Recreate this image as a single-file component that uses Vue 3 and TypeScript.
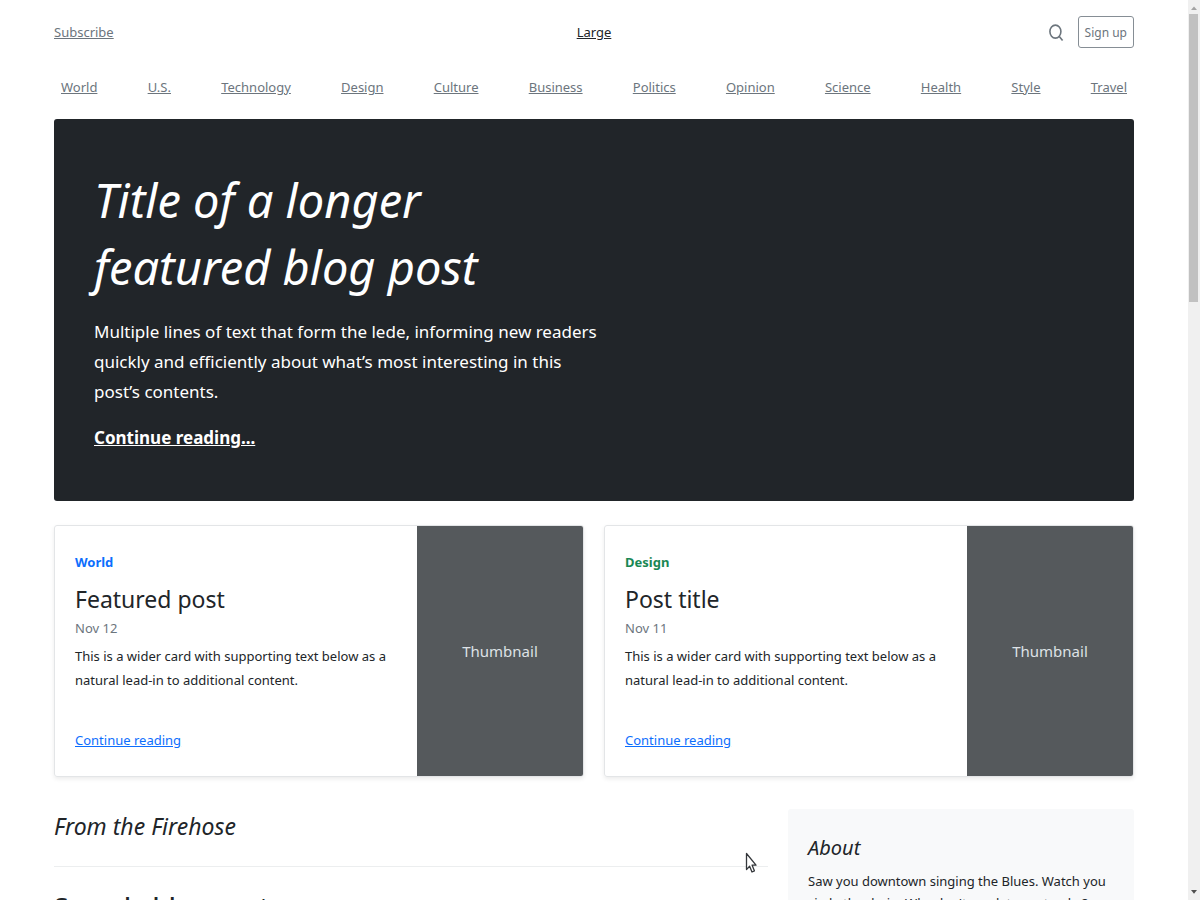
<script setup lang="ts">
interface Post {
  category: string
  tone: 'primary' | 'success'
  title: string
  date: string
  text: string
}

const sections: string[] = [
  'World', 'U.S.', 'Technology', 'Design', 'Culture', 'Business',
  'Politics', 'Opinion', 'Science', 'Health', 'Style', 'Travel',
]

const posts: Post[] = [
  {
    category: 'World',
    tone: 'primary',
    title: 'Featured post',
    date: 'Nov 12',
    text: 'This is a wider card with supporting text below as a natural lead-in to additional content.',
  },
  {
    category: 'Design',
    tone: 'success',
    title: 'Post title',
    date: 'Nov 11',
    text: 'This is a wider card with supporting text below as a natural lead-in to additional content.',
  },
]
</script>

<template>
  <div class="viewport">
    <div class="page">
      <div class="container">
        <header class="masthead">
          <div><a class="muted" href="#">Subscribe</a></div>
          <a class="brand" href="#">Large</a>
          <div class="actions">
            <a class="search" href="#" aria-label="Search">
              <svg width="18" height="20" viewBox="0 0 18 20" fill="none" stroke="currentColor" stroke-width="1.6">
                <ellipse cx="7.4" cy="9.6" rx="5.5" ry="6.5" />
                <path d="M11.3 14.4 14.6 18.6" />
              </svg>
            </a>
            <button class="signup" type="button">Sign up</button>
          </div>
        </header>

        <nav class="sections">
          <a v-for="name in sections" :key="name" class="muted" href="#">{{ name }}</a>
        </nav>

        <main>
          <section class="hero">
            <div class="hero-body">
              <h1>Title of a longer featured blog post</h1>
              <p>Multiple lines of text that form the lede, informing new readers quickly and efficiently about what’s most interesting in this post’s contents.</p>
              <p><a href="#">Continue reading...</a></p>
            </div>
          </section>

          <div class="cards">
            <article v-for="post in posts" :key="post.title" class="card">
              <div class="card-body">
                <strong :class="post.tone">{{ post.category }}</strong>
                <h3>{{ post.title }}</h3>
                <div class="date">{{ post.date }}</div>
                <p>{{ post.text }}</p>
                <a href="#">Continue reading</a>
              </div>
              <div class="thumbnail">Thumbnail</div>
            </article>
          </div>

          <div class="columns">
            <div class="feed">
              <h3>From the Firehose</h3>
              <h2>Sample blog post</h2>
            </div>
            <aside class="about">
              <h4>About</h4>
              <p>Saw you downtown singing the Blues. Watch you circle the drain. Why don't you let me stop by? Heavy is the head that wears the crown.</p>
            </aside>
          </div>
        </main>
      </div>
    </div>

    <div class="scrollbar" aria-hidden="true">
      <svg width="12" height="14" viewBox="0 0 12 14"><path d="M3 10 6 6.4 9 10Z" fill="#a3a3a3" /></svg>
      <div class="track"><div class="thumb"></div></div>
      <svg width="12" height="14" viewBox="0 0 12 14"><path d="M3 4 6 7.8 9 4Z" fill="#505050" /></svg>
    </div>

    <svg class="pointer" width="14" height="22" viewBox="0 0 14 22" aria-hidden="true">
      <path d="M1.5 1.5V17.6L4.6 14.2 7 20 9.4 18.8 7.1 13.2H11Z" fill="#fff" stroke="#34373b" stroke-width="1.3" stroke-linejoin="round" />
    </svg>
  </div>
</template>

<style>
body {
  margin: 0;
  background: #fff;
}
</style>

<style scoped>
.viewport {
  position: relative;
  display: flex;
  height: 100vh;
  overflow: hidden;
  font-family: "Noto Sans", "Open Sans", sans-serif;
  font-size: 13px;
  line-height: 24px;
  color: #212529;
}

.page {
  flex: 1;
  min-width: 0;
  overflow: hidden;
}

.container {
  max-width: 1080px;
  margin: 0 auto;
}

h1, h2, h3, h4, p {
  margin: 0;
  font-weight: 400;
}

.muted {
  color: #6c757d;
}

.masthead {
  display: grid;
  grid-template-columns: 1fr auto 1fr;
  align-items: center;
  height: 64px;
}

.brand {
  color: #212529;
}

.actions {
  display: flex;
  justify-content: flex-end;
  align-items: center;
  gap: 12px;
}

.search {
  display: flex;
  color: #6c757d;
}

.signup {
  height: 32px;
  padding: 0 6px;
  border: 1px solid #868e95;
  border-radius: 3px;
  background: transparent;
  color: #6c757d;
  font-family: inherit;
  font-size: 12px;
}

.sections {
  display: flex;
  justify-content: space-between;
  padding: 11px 7px 20px;
}

.hero {
  padding: 48px 40px;
  border-radius: 3px;
  background: #212529;
  color: #fff;
}

.hero-body {
  max-width: 508px;
  font-size: 17px;
  line-height: 30px;
}

.hero h1 {
  max-width: 440px;
  font-size: 47px;
  line-height: 67px;
  font-style: italic;
}

.hero p {
  margin-top: 16px;
}

.hero a {
  color: #fff;
  font-weight: 700;
}

.cards {
  display: grid;
  grid-template-columns: 1fr 1fr;
  gap: 20px;
  margin-top: 24px;
}

.card {
  display: flex;
  min-height: 250px;
  border: 1px solid #e3e5e7;
  border-radius: 3px;
  box-shadow: 0 2px 4px rgba(0, 0, 0, 0.08);
  overflow: hidden;
}

.card-body {
  flex: 1;
  display: flex;
  flex-direction: column;
  align-items: flex-start;
  padding: 24px 20px;
}

.card-body h3 {
  margin-top: 8px;
  font-size: 23px;
  line-height: 34px;
}

.card-body p {
  margin-top: 4px;
}

.card-body a {
  margin-top: auto;
  color: #0d6efd;
}

.card-body .primary {
  color: #0d6efd;
}

.card-body .success {
  color: #198754;
}

.date {
  color: #6c757d;
}

.thumbnail {
  display: flex;
  align-items: center;
  justify-content: center;
  width: 166px;
  background: #55595c;
  color: #dee2e6;
  font-size: 15px;
}

.columns {
  display: grid;
  grid-template-columns: minmax(0, 714fr) minmax(0, 346fr);
  gap: 20px;
  margin-top: 32px;
}

.feed h3 {
  padding-bottom: 23px;
  border-bottom: 1px solid #eceeef;
  font-size: 23px;
  line-height: 34px;
  font-style: italic;
}

.feed h2 {
  margin-top: 24px;
  font-size: 26px;
  font-weight: 500;
  line-height: 30px;
}

.about {
  padding: 24px 20px;
  border-radius: 3px;
  background: #f8f9fa;
}

.about h4 {
  margin-bottom: 8px;
  font-size: 20px;
  line-height: 29px;
  font-style: italic;
}

.about p {
  line-height: 22px;
}

.scrollbar {
  display: flex;
  flex-direction: column;
  width: 12px;
  background: #f0f0f0;
}

.scrollbar svg {
  flex: none;
}

.track {
  flex: 1;
  padding: 0 2px 0 1px;
}

.thumb {
  height: 33%;
  background: #c1c1c1;
}

.pointer {
  position: absolute;
  left: 745px;
  top: 852px;
}
</style>
